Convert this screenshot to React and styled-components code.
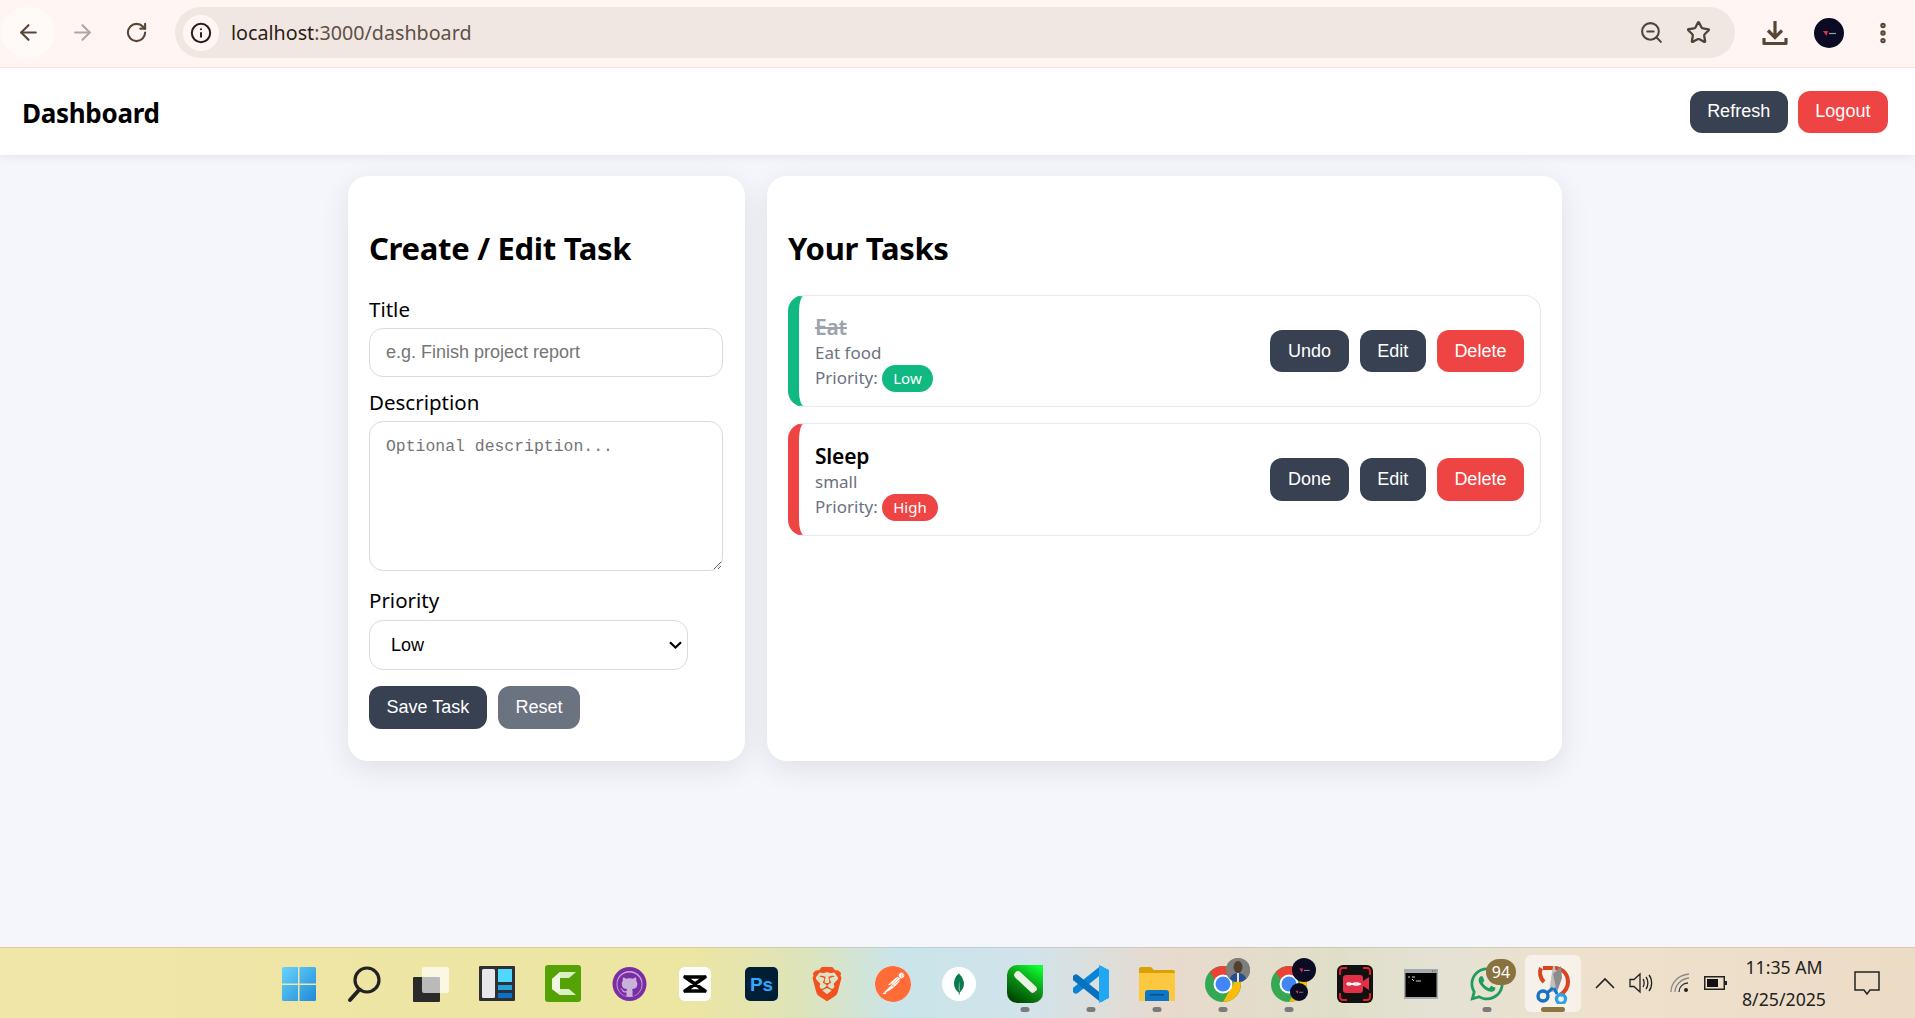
import styled, { createGlobalStyle } from "styled-components";
import { ArrowLeft, ArrowRight, RotateCw, Info, ZoomOut, Star, MoreVertical } from "lucide-react";
import { FaWhatsapp, FaGithub } from "react-icons/fa";
import { SiBrave, SiPostman, SiMongodb } from "react-icons/si";

const GlobalStyle = createGlobalStyle`
  * { box-sizing: border-box; }
  html, body { margin: 0; padding: 0; height: 100%; overflow: hidden; }
  body { font-family: "Noto Sans", "Liberation Sans", sans-serif; background: #f4f6fb; color: #000; }
`;

const Page = styled.div`
  display: flex;
  flex-direction: column;
  height: 1018px;
  overflow: hidden;
`;

/* browser chrome */
const BrowserBar = styled.div`
  height: 68px;
  flex: none;
  display: flex;
  align-items: center;
  padding-bottom: 2px;
  background: #fff6f3;
  border-bottom: 1px solid #f3e3d8;
  position: relative;
  z-index: 3;
`;

const NavButton = styled.div`
  width: 54px;
  height: 51px;
  flex: none;
  display: flex;
  align-items: center;
  justify-content: center;
  border-radius: 50%;
  color: ${(p) => (p.$off ? "#b0a5a0" : "#584636")};
  background: ${(p) => (p.$hover ? "#fff9f7" : "transparent")};
`;

const NavGroup = styled.div`
  display: flex;
  padding-left: 1px;
  margin-right: 12px;
`;

const UrlPill = styled.div`
  width: 1560px;
  height: 51px;
  flex: none;
  display: flex;
  align-items: center;
  background: #f1e7e2;
  border-radius: 26px;
  padding: 0 15px 0 8px;
`;

const InfoChip = styled.div`
  width: 36px;
  height: 36px;
  border-radius: 50%;
  background: #fff6f3;
  display: flex;
  align-items: center;
  justify-content: center;
  color: #241c18;
`;

const UrlText = styled.div`
  margin-left: 12px;
  font-size: 19.7px;
  color: #5f5048;
  flex: 1;
  span { color: #2a1d14; }
`;

const UrlIcons = styled.div`
  display: flex;
  align-items: center;
  gap: 22px;
  color: #4f4338;
  margin-right: 9px;
`;

const ToolIcons = styled.div`
  display: flex;
  align-items: center;
  margin-left: 27px;
  gap: 26px;
  color: #584636;
`;

const AvatarDisc = styled.div`
  width: 30px;
  height: 30px;
  border-radius: 50%;
  background: #0c0b24;
  display: flex;
  align-items: center;
  justify-content: center;
`;

/* app header */
const Header = styled.header`
  height: 87px;
  flex: none;
  display: flex;
  align-items: center;
  justify-content: space-between;
  padding: 0 27px 0 22px;
  background: #fff;
  box-shadow: 0 2px 10px rgba(0, 0, 0, 0.07);
  position: relative;
  z-index: 2;
`;

const Brand = styled.h1`
  margin: 2px 0 0;
  font-size: 26px;
  font-weight: 700;
  letter-spacing: -0.3px;
`;

const Row = styled.div`
  display: flex;
  gap: ${(p) => p.$gap || 11}px;
  align-items: center;
`;

const Button = styled.button`
  border: none;
  height: ${(p) => p.$h || 42}px;
  padding: 0 17.6px;
  border-radius: 12px;
  font-family: "Liberation Sans", Arial, sans-serif;
  font-size: 18px;
  color: #fff;
  background: ${(p) => p.$bg || "#374151"};
`;

/* main */
const Main = styled.main`
  flex: 1;
  display: grid;
  grid-template-columns: 397px 795px;
  column-gap: 22px;
  align-content: start;
  padding: 21px 0 0 348px;
`;

const Card = styled.section`
  height: 585px;
  background: #fff;
  border-radius: 20px;
  padding: 52px 21px 0;
  box-shadow: 0 8px 30px rgba(0, 0, 0, 0.09);
`;

const CardTitle = styled.h2`
  margin: 0 0 28px;
  font-size: 31px;
  line-height: 40px;
  font-weight: 700;
  letter-spacing: -0.3px;
`;

const Field = styled.label`
  display: block;
  font-size: 20.5px;
  line-height: 26px;
  margin-bottom: ${(p) => p.$mb || 12}px;
  span { display: block; margin-bottom: ${(p) => p.$gap || 6}px; }
`;

const TextInput = styled.input`
  display: block;
  width: 354px;
  height: 49px;
  border: 1.5px solid #d8dbe6;
  border-radius: 14px;
  padding: 0 16px;
  font-family: "Liberation Sans", Arial, sans-serif;
  font-size: 18px;
  outline: none;
  &::placeholder { color: #757575; }
`;

const TextArea = styled.textarea`
  display: block;
  width: 354px;
  height: 150px;
  border: 1.5px solid #d8dbe6;
  border-radius: 14px;
  padding: 15px 16px;
  font-family: "Liberation Mono", monospace;
  font-size: 16.45px;
  outline: none;
  &::placeholder { color: #757575; }
`;

const Select = styled.select`
  display: block;
  width: 319px;
  height: 50px;
  border: 1.5px solid #d8dbe6;
  border-radius: 14px;
  padding: 0 21px;
  font-family: "Liberation Sans", Arial, sans-serif;
  font-size: 18px;
  color: #000;
  outline: none;
  appearance: none;
  background: #fff url("data:image/svg+xml,%3Csvg xmlns='http://www.w3.org/2000/svg' width='13' height='8' viewBox='0 0 13 8' fill='none' stroke='%23000' stroke-width='2.200'%3E%3Cpath d='M1 1.200L6.500 6.500L12 1.200'/%3E%3C/svg%3E") no-repeat right 5px center;
`;

const TaskTitleBar = styled(CardTitle)`
  margin-bottom: 27px;
`;

const TaskList = styled.div`
  display: flex;
  flex-direction: column;
  gap: 16px;
`;

const TaskItem = styled.article`
  height: ${(p) => p.$h}px;
  display: flex;
  align-items: center;
  justify-content: space-between;
  border: 1.5px solid #e8e8f3;
  border-left: 11px solid ${(p) => p.$accent};
  border-radius: 16px;
  padding: 0 16px;
`;

const TaskInfo = styled.div`
  display: flex;
  flex-direction: column;
  padding-top: 3px;
`;

const TaskName = styled.div`
  font-size: 21px;
  line-height: 28px;
  font-weight: 600;
  letter-spacing: -0.2px;
  color: ${(p) => (p.$done ? "#9ca3af" : "#000")};
  text-decoration: ${(p) => (p.$done ? "line-through" : "none")};
`;

const TaskText = styled.div`
  font-size: 17px;
  line-height: ${(p) => p.$lh || 24}px;
  color: #6b7280;
`;

const Badge = styled.span`
  display: inline-block;
  height: 27px;
  line-height: 27px;
  padding: 0 11.5px;
  margin-left: 4px;
  border-radius: 14px;
  font-size: 15px;
  color: #fff;
  background: ${(p) => p.$bg};
`;

/* windows taskbar */
const Taskbar = styled.footer`
  height: 71px;
  flex: none;
  display: flex;
  align-items: center;
  padding-left: 266px;
  border-top: 1px solid rgba(120, 110, 70, 0.18);
  background: linear-gradient(90deg, #efe6a8 0%, #ede5a2 36%, #dde4bb 42%, #c9e4ea 47%, #d2e3ea 54%, #e8dacd 61%, #dfdfc9 70%, #e4e2d4 75%, #efe0cc 84%, #ecdcc6 100%);
`;

const TaskSlot = styled.div`
  width: 66px;
  height: 57px;
  flex: none;
  position: relative;
  display: flex;
  align-items: center;
  justify-content: center;
  border-radius: 6px;
  margin-top: 1px;
  background: ${(p) => (p.$active ? "rgba(255,255,255,0.55)" : "transparent")};
  ${(p) => p.$active && "width: 56px; margin-left: 5px;"}
`;

const RunDot = styled.i`
  position: absolute;
  left: 50%;
  bottom: 0;
  transform: translateX(-50%);
  width: ${(p) => (p.$active ? 24 : 9)}px;
  height: 5px;
  border-radius: 3px;
  background: ${(p) => (p.$active ? "#8d7440" : "#7b7b7b")};
`;

const CountBadge = styled.span`
  position: absolute;
  top: 4px;
  right: 4px;
  width: 30px;
  height: 26px;
  border-radius: 13px;
  background: #8a7240;
  color: #fff;
  font-family: "Noto Sans", sans-serif;
  font-size: 16px;
  line-height: 26px;
  text-align: center;
`;

const Tray = styled.div`
  display: flex;
  align-items: center;
  margin-left: 6px;
  color: #222;
`;

const TrayIcon = styled.div`
  width: ${(p) => p.$w}px;
  flex: none;
  display: flex;
  justify-content: center;
`;

const Clock = styled.div`
  width: 100px;
  flex: none;
  margin-left: 5px;
  text-align: center;
  font-size: 17.7px;
  line-height: 32px;
  color: #222;
  white-space: nowrap;
`;

const OverlayDisc = styled.span`
  position: absolute;
  top: ${(p) => p.$top}px;
  left: ${(p) => p.$left}px;
  width: ${(p) => p.$s}px;
  height: ${(p) => p.$s}px;
  border-radius: 50%;
  background: ${(p) => p.$bg};
  overflow: hidden;
  display: flex;
  align-items: center;
  justify-content: center;
`;

const CircleWrap = styled.div`
  width: ${(p) => p.$s}px;
  height: ${(p) => p.$s}px;
  border-radius: 50%;
  background: #fff;
  display: flex;
  align-items: center;
  justify-content: center;
`;

const WinIcon = () => (
  <svg width="36" height="36" viewBox="0 0 36 36">
    <defs>
      <linearGradient id="w1" x1="0" y1="0" x2="1" y2="1">
        <stop offset="0" stopColor="#69d3fb" />
        <stop offset="1" stopColor="#1f8ad8" />
      </linearGradient>
    </defs>
    <path fill="url(#w1)" d="M1 2.5A1.5 1.5 0 0 1 2.500 1H17v16.500H1zM18.500 1H33.500A1.500 1.500 0 0 1 35 2.500V17.500H18.500zM1 19H17V35H2.500A1.500 1.500 0 0 1 1 33.500zM18.500 19H35V33.500A1.500 1.500 0 0 1 33.500 35H18.500z" />
  </svg>
);

const SearchIcon = () => (
  <svg width="36" height="38" viewBox="0 0 36 38" fill="none" stroke="#222" strokeWidth="3.2" strokeLinecap="round">
    <circle cx="20" cy="15" r="12" />
    <path d="M12 25L3 35" strokeWidth="4" />
  </svg>
);

const TaskViewIcon = () => (
  <svg width="38" height="36" viewBox="0 0 38 36">
    <rect x="1" y="11" width="27" height="25" rx="1" fill="#2a2a2a" />
    <rect x="10" y="1" width="27" height="26" rx="2" fill="#fff" fillOpacity="0.68" />
  </svg>
);

const WidgetsIcon = () => (
  <svg width="36" height="36" viewBox="0 0 36 36">
    <rect width="36" height="35" rx="1" fill="#2f3033" />
    <rect x="3" y="3" width="13" height="29" rx="1.500" fill="#e8e8ea" />
    <rect x="19" y="3" width="14" height="13" fill="#4fd8ff" />
    <rect x="19" y="19" width="14" height="5" fill="#25a2e0" />
    <rect x="19" y="27" width="14" height="5" fill="#0b70c9" />
  </svg>
);

const CamtasiaIcon = () => (
  <svg width="36" height="37" viewBox="0 0 36 37">
    <rect width="36" height="37" rx="3" fill="#54a203" />
    <path d="M7 14L15 7H31L24 13H15V24H24L31 30H15L7 24Z" fill="#dcefc4" />
    <path d="M7 14L15 7V30L7 24Z" fill="#f0f7e4" />
  </svg>
);

const GithubIcon = () => (
  <svg width="35" height="36" viewBox="0 0 35 36">
    <circle cx="17.500" cy="18" r="17" fill="#7a2da5" />
    <circle cx="17.500" cy="18" r="13" fill="#c9b2d9" />
    <foreignObject x="5" y="5.500" width="25" height="25">
      <FaGithub size={25} color="#7a2da5" />
    </foreignObject>
  </svg>
);

const CapcutIcon = () => (
  <svg width="32" height="34" viewBox="0 0 32 34">
    <rect width="32" height="34" rx="6" fill="#fff" />
    <path d="M6 10H26M6 24H26M6 10L26 24M26 10L6 24" fill="none" stroke="#000" strokeWidth="3.600" strokeLinejoin="round" strokeLinecap="round" />
  </svg>
);

const PsIcon = () => (
  <svg width="33" height="34" viewBox="0 0 33 34">
    <rect width="33" height="34" rx="5" fill="#001e36" />
    <text x="16.500" y="24" textAnchor="middle" fontFamily="Liberation Sans, sans-serif" fontWeight="700" fontSize="19" fill="#31a8ff">Ps</text>
  </svg>
);

const PencilIcon = () => (
  <svg width="36" height="38" viewBox="0 0 36 38">
    <defs>
      <linearGradient id="p1" x1="0.800" y1="0" x2="0.200" y2="1">
        <stop offset="0" stopColor="#0cff30" />
        <stop offset="0.45" stopColor="#0c9a18" />
        <stop offset="1" stopColor="#003f00" />
      </linearGradient>
    </defs>
    <path d="M0 10A10 10 0 0 1 10 0H36V28A10 10 0 0 1 26 38H10A10 10 0 0 1 0 28Z" fill="url(#p1)" />
    <path d="M11 10L26 24" stroke="#e8f2e2" strokeWidth="7.500" strokeLinecap="round" />
    <path d="M26 28L30 25L29 29Z" fill="#5a6a58" />
  </svg>
);

const VscodeIcon = () => (
  <svg width="36" height="38" viewBox="0 0 36 38" fill="none">
    <path d="M3 25L28 5" stroke="#0a84d6" strokeWidth="7" strokeLinecap="round" />
    <path d="M3 13L28 33" stroke="#0a72bd" strokeWidth="7" strokeLinecap="round" />
    <path d="M26 0L36 5V33L26 38Z" fill="#22a7f2" />
  </svg>
);

const FolderIcon = () => (
  <svg width="36" height="36" viewBox="0 0 36 36">
    <path d="M0 3A2 2 0 0 1 2 1H12L15 4H34A2 2 0 0 1 36 6V10H0Z" fill="#d9a106" />
    <path d="M0 7H36V35H0Z" fill="#fcc83f" />
    <path d="M6 35V27A3 3 0 0 1 9 24H27A3 3 0 0 1 30 27V35Z" fill="#0d77c6" />
    <rect x="11" y="28" width="14" height="1.500" fill="#064f8f" />
  </svg>
);

const ChromeIcon = ({ children }) => (
  <>
    <svg width="36" height="38" viewBox="0 0 36 38">
      <circle cx="18" cy="19" r="18" fill="#34a853" />
      <path d="M18 1A18 18 0 0 1 34 11H18A8 8 0 0 0 10.500 16L5 7A18 18 0 0 1 18 1Z" fill="#ea4335" />
      <path d="M34 11A18 18 0 0 1 18 37L26 23A8 8 0 0 0 26 11Z" fill="#fbbc04" />
      <circle cx="18" cy="19" r="9.500" fill="#fff" />
      <circle cx="18" cy="19" r="7.500" fill="#4285f4" />
    </svg>
    {children}
  </>
);

const AvatarLogo = ({ size }) => (
  <svg width={size} height={size} viewBox="0 0 30 30">
    <path d="M9 13H14L12.500 18Z" fill="#d9363e" />
    <path d="M15 15.500H22" stroke="#9a9ab0" strokeWidth="1.200" />
  </svg>
);

const PersonPhoto = () => (
  <svg width="24" height="24" viewBox="0 0 24 24">
    <rect width="24" height="24" fill="#7c7f7d" />
    <ellipse cx="12" cy="9" rx="4.500" ry="6" fill="#54402f" />
    <path d="M3 24C4 17 8 15 12 15C16 15 20 17 21 24Z" fill="#274c8f" />
    <path d="M11 15H13V24H11Z" fill="#e4e6ea" />
  </svg>
);

const RecorderIcon = () => (
  <svg width="36" height="38" viewBox="0 0 36 38" fill="none">
    <rect width="36" height="38" rx="6" fill="#111" />
    <path d="M3 10V6A3 3 0 0 1 6 3H10M26 3H30A3 3 0 0 1 33 6V10M3 28V32A3 3 0 0 0 6 35H10M33 28V32A3 3 0 0 1 30 35H26" stroke="#e8202a" strokeWidth="1.800" />
    <rect x="6" y="10" width="20" height="18" rx="3" fill="#e0314b" />
    <path d="M26 16L32 12V25L26 21Z" fill="#e0314b" />
    <path d="M10 19C12 15 17 23 23 19C17 15 12 23 10 19Z" stroke="#fff" strokeWidth="1.600" />
  </svg>
);

const CmdIcon = () => (
  <svg width="34" height="30" viewBox="0 0 34 30">
    <rect width="34" height="30" fill="#a4a9ae" />
    <rect x="1.500" y="4" width="31" height="24" fill="#000" />
    <path d="M4 8H6M8 8H11M8 10L10 12M12 12H17" stroke="#d0d0d0" strokeWidth="1" />
    <path d="M28 2H29M30.500 2H31.500" stroke="#444" strokeWidth="1" />
  </svg>
);

const SnipIcon = () => (
  <svg width="36" height="40" viewBox="0 0 36 40" fill="none">
    <path d="M8 4H17C26 3 33 9 33 18C33 24 30 28 25 31" stroke="#d9441f" strokeWidth="4" />
    <path d="M6 4C4 8 5 14 9 18" stroke="#d9441f" strokeWidth="4" />
    <path d="M14 28L18 2L20 2L22 28Z" fill="#bfbfbf" />
    <path d="M22 28L18 10L26 2L27 14Z" fill="#8c8c8c" />
    <circle cx="8" cy="32" r="5" stroke="#1673c6" strokeWidth="3.400" />
    <circle cx="26" cy="35" r="4.500" stroke="#33a0e4" strokeWidth="3.400" />
    <path d="M12 29L18 24M22 30L19 24" stroke="#1673c6" strokeWidth="3" />
  </svg>
);

const DownloadIcon = () => (
  <svg width="26" height="26" viewBox="0 0 26 26" fill="none" stroke="currentColor" strokeWidth="3.200">
    <path d="M13 1V17M6 10.500L13 17.500L20 10.500" />
    <path d="M2 18V23.500H24V18" strokeLinejoin="round" />
  </svg>
);

const slots = [
  { icon: <WinIcon /> },
  { icon: <SearchIcon /> },
  { icon: <TaskViewIcon /> },
  { icon: <WidgetsIcon /> },
  { icon: <CamtasiaIcon /> },
  { icon: <GithubIcon /> },
  { icon: <CapcutIcon /> },
  { icon: <PsIcon /> },
  { icon: <SiBrave size={34} color="#f4511e" /> },
  { icon: <CircleWrap $s={36}><SiPostman size={36} color="#ff6c37" /></CircleWrap> },
  { icon: <CircleWrap $s={34}><SiMongodb size={22} color="#0b7a50" /></CircleWrap> },
  { icon: <PencilIcon />, run: true },
  { icon: <VscodeIcon />, run: true },
  { icon: <FolderIcon />, run: true },
  {
    icon: (
      <ChromeIcon>
        <OverlayDisc $top={3} $left={36} $s={24} $bg="#7c7f7d"><PersonPhoto /></OverlayDisc>
      </ChromeIcon>
    ),
    run: true,
  },
  {
    icon: (
      <ChromeIcon>
        <OverlayDisc $top={3} $left={36} $s={24} $bg="#0c0b24"><AvatarLogo size={24} /></OverlayDisc>
        <OverlayDisc $top={28} $left={34} $s={18} $bg="#0c0b24"><AvatarLogo size={18} /></OverlayDisc>
      </ChromeIcon>
    ),
    run: true,
  },
  { icon: <RecorderIcon /> },
  { icon: <CmdIcon /> },
  { icon: <FaWhatsapp size={38} color="#1f9d5b" />, run: true, count: 94 },
];

const tasks = [
  { id: 1, name: "Eat", text: "Eat food", level: "Low", color: "#10b981", action: "Undo", done: true, h: 112 },
  { id: 2, name: "Sleep", text: "small", level: "High", color: "#ef4444", action: "Done", h: 113 },
];

const App = () => {
  return (
    <Page>
      <GlobalStyle />
      <BrowserBar>
        <NavGroup>
          <NavButton $hover><ArrowLeft size={25} strokeWidth={2} /></NavButton>
          <NavButton $off><ArrowRight size={25} strokeWidth={2} /></NavButton>
          <NavButton><RotateCw size={23} strokeWidth={2.2} /></NavButton>
        </NavGroup>
        <UrlPill>
          <InfoChip><Info size={22} strokeWidth={2.2} /></InfoChip>
          <UrlText><span>localhost</span>:3000/dashboard</UrlText>
          <UrlIcons>
            <ZoomOut size={25} strokeWidth={2} />
            <Star size={25} strokeWidth={2.2} />
          </UrlIcons>
        </UrlPill>
        <ToolIcons>
          <DownloadIcon />
          <AvatarDisc><AvatarLogo size={30} /></AvatarDisc>
          <MoreVertical size={26} strokeWidth={3} />
        </ToolIcons>
      </BrowserBar>

      <Header>
        <Brand>Dashboard</Brand>
        <Row $gap={10}>
          <Button>Refresh</Button>
          <Button $bg="#ef4444">Logout</Button>
        </Row>
      </Header>

      <Main>
        <Card>
          <CardTitle>Create / Edit Task</CardTitle>
          <Field>
            <span>Title</span>
            <TextInput placeholder="e.g. Finish project report" />
          </Field>
          <Field $mb={16}>
            <span>Description</span>
            <TextArea placeholder="Optional description..." />
          </Field>
          <Field $mb={16} $gap={7}>
            <span>Priority</span>
            <Select defaultValue="Low">
              <option>Low</option>
              <option>Medium</option>
              <option>High</option>
            </Select>
          </Field>
          <Row>
            <Button $h={43}>Save Task</Button>
            <Button $h={43} $bg="#6b7280">Reset</Button>
          </Row>
        </Card>

        <Card>
          <TaskTitleBar>Your Tasks</TaskTitleBar>
          <TaskList>
            {tasks.map((t) => (
              <TaskItem key={t.id} $accent={t.color} $h={t.h}>
                <TaskInfo>
                  <TaskName $done={t.done}>{t.name}</TaskName>
                  <TaskText>{t.text}</TaskText>
                  <TaskText $lh={26}>
                    Priority:<Badge $bg={t.color}>{t.level}</Badge>
                  </TaskText>
                </TaskInfo>
                <Row>
                  <Button $h={t.h - 70}>{t.action}</Button>
                  <Button $h={t.h - 70}>Edit</Button>
                  <Button $h={t.h - 70} $bg="#ef4444">Delete</Button>
                </Row>
              </TaskItem>
            ))}
          </TaskList>
        </Card>
      </Main>

      <Taskbar>
        {slots.map((s, i) => (
          <TaskSlot key={i}>
            {s.icon}
            {s.count && <CountBadge>{s.count}</CountBadge>}
            {s.run && <RunDot />}
          </TaskSlot>
        ))}
        <TaskSlot $active>
          <SnipIcon />
          <RunDot $active />
        </TaskSlot>
        <Tray>
          <TrayIcon $w={36}>
            <svg width="20" height="12" viewBox="0 0 20 12" fill="none" stroke="#222" strokeWidth="1.600"><path d="M1 11L10 2L19 11" /></svg>
          </TrayIcon>
          <TrayIcon $w={36}>
            <svg width="24" height="22" viewBox="0 0 24 22" fill="none" stroke="#222" strokeWidth="1.300"><path d="M1 7.500H5L11 2V20L5 14.500H1Z" /><path d="M14 7C15.500 9 15.500 13 14 15M17 5C19.500 8 19.500 14 17 17M20 3C23.500 7 23.500 15 20 19" /></svg>
          </TrayIcon>
          <TrayIcon $w={42}>
            <svg width="20" height="20" viewBox="0 0 20 20" fill="none" stroke="#888" strokeWidth="1.300"><path d="M1 19C1 10 8 2 19 1M5 19C5 12 11 6 19 5" /><path d="M9 19C9 14 13 10 18 10" stroke="#333" /><circle cx="16" cy="17" r="2" fill="#222" stroke="none" /></svg>
          </TrayIcon>
          <TrayIcon $w={28}>
            <svg width="23" height="14" viewBox="0 0 23 14" fill="none"><rect x="0.750" y="0.750" width="19.500" height="12.500" stroke="#222" strokeWidth="1.500" /><rect x="3" y="3" width="11" height="8" fill="#111" /><rect x="21" y="5" width="2" height="4" fill="#222" /></svg>
          </TrayIcon>
          <Clock>
            11:35 AM
            <br />
            8/25/2025
          </Clock>
          <TrayIcon $w={66}>
            <svg width="26" height="25" viewBox="0 0 26 25" fill="none" stroke="#222" strokeWidth="1.500"><path d="M1 1H25V19H16L13 23L10 19H1Z" /></svg>
          </TrayIcon>
        </Tray>
      </Taskbar>
    </Page>
  );
};

export default App;
